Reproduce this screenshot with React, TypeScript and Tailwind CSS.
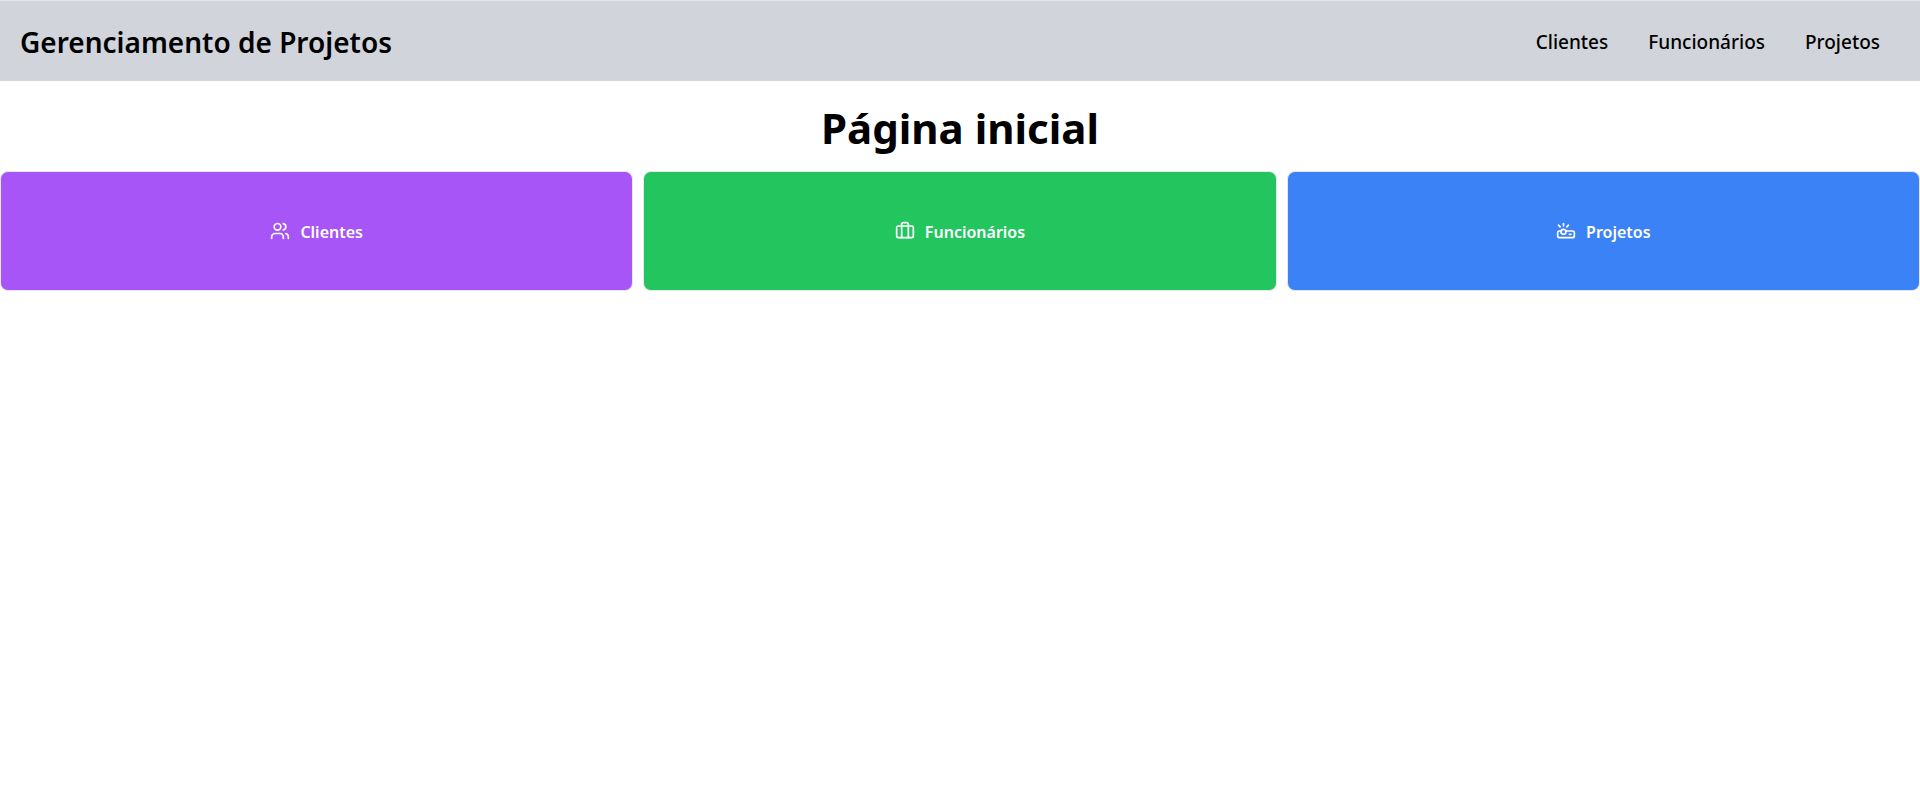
import React from 'react';
import { Briefcase, LucideIcon, Projector, Users } from 'lucide-react';
import { clsx } from 'clsx';

interface Section {
  label: string;
  href: string;
  icon: LucideIcon;
  color: string;
}

const sections: Section[] = [
  { label: 'Clientes', href: '#clientes', icon: Users, color: 'bg-[#a855f7]' },
  { label: 'Funcionários', href: '#funcionarios', icon: Briefcase, color: 'bg-[#22c55e]' },
  { label: 'Projetos', href: '#projetos', icon: Projector, color: 'bg-[#3b82f6]' },
];

const Header: React.FC = () => (
  <header className="flex items-center justify-between border-t border-[#e5e7eb] bg-[#d1d5db] px-5 pt-[21px] pb-[19px]">
    <p className="text-[28px] leading-10 font-semibold">Gerenciamento de Projetos</p>
    <nav className="flex gap-10 pr-5 text-[19px] font-medium">
      {sections.map(({ label, href }) => (
        <a key={label} href={href}>{label}</a>
      ))}
    </nav>
  </header>
);

const App: React.FC = () => (
  <div className="bg-white font-['Noto_Sans','Open_Sans',sans-serif] text-black">
    <Header />
    <main>
      <h1 className="pt-[22px] pb-[18px] text-center text-[42px] leading-[50px] font-bold">Página inicial</h1>
      <div className="grid grid-cols-3 gap-2.5">
        {sections.map(({ label, href, icon: Icon, color }) => (
          <a
            key={label}
            href={href}
            className={clsx(
              'flex h-30 items-center justify-center gap-2.5 rounded-lg border border-[#e5e7eb] font-semibold text-white',
              color
            )}
          >
            <Icon size={20} strokeWidth={2} aria-hidden="true" />
            <span className="pt-0.5">{label}</span>
          </a>
        ))}
      </div>
    </main>
  </div>
);

export default App;
